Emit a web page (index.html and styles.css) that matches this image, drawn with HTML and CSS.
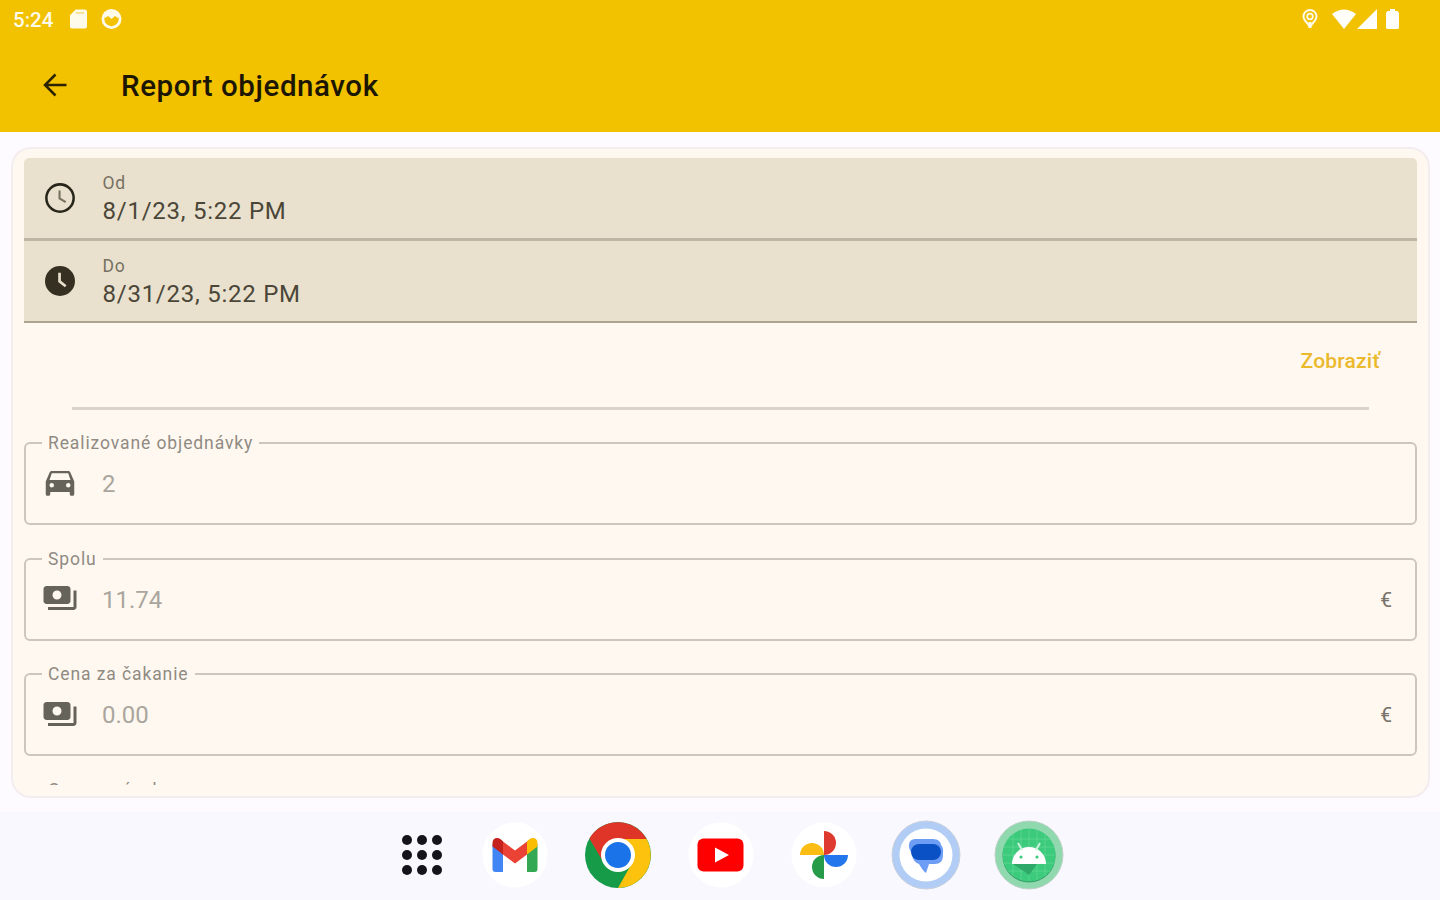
FILE: index.html
```html
<!DOCTYPE html>
<html lang="sk">
<head>
<meta charset="utf-8">
<title>Report objednávok</title>
<link rel="stylesheet" href="styles.css">
</head>
<body>
<div class="screen">
  <header class="header">
    <div class="status">
      <span class="time">5:24</span>
      <svg class="st-sd" width="17" height="20" viewBox="0 0 18 20"><path fill="#fffbea" d="M6 0h10a2 2 0 0 1 2 2v16a2 2 0 0 1-2 2H2a2 2 0 0 1-2-2V6z"/><path d="M6 3.600h9" stroke="#f2d768" stroke-width="1.400"/></svg>
      <svg class="st-face" width="21" height="20" viewBox="0 0 21 20"><circle cx="10.500" cy="10" r="8.600" fill="none" stroke="#fffbea" stroke-width="2.800"/><path fill="#fffbea" d="M3 3h15l-1 6-3-2-3.500 3L7 7 4 9z"/></svg>
      <span class="spacer"></span>
      <svg class="st-pin" width="16" height="20" viewBox="0 0 16 20"><path fill="none" stroke="#fffbea" stroke-width="2" d="M8 18.500C7 14.500 1.500 12 1.500 7.500a6.500 6.500 0 0 1 13 0C14.500 12 9 14.500 8 18.500z"/><circle cx="8" cy="7.500" r="2.800" fill="none" stroke="#fffbea" stroke-width="1.800"/><path d="M8 13v6" stroke="#fffbea" stroke-width="3"/></svg>
      <svg class="st-wifi" width="24" height="20" viewBox="0 0 24 20"><path fill="#fffef8" d="M0 5Q12-4 24 5L12 20z"/></svg>
      <svg class="st-cell" width="20" height="20" viewBox="0 0 20 20"><path fill="#fffef8" d="M20 0v20H0z"/></svg>
      <svg class="st-batt" width="13" height="20" viewBox="0 0 13 20"><path fill="#fffef8" d="M4 0h5v2h2.500L13 4v14.500a1.500 1.500 0 0 1-1.500 1.500h-10A1.500 1.500 0 0 1 0 18.500V4l1.500-2H4z"/></svg>
    </div>
    <div class="appbar">
      <svg width="24" height="24" viewBox="0 0 24 24"><path d="M23.500 12H2M12.500 1.500 2 12l10.500 10.500" fill="none" stroke="#2b2200" stroke-width="2.500"/></svg>
      <h1 class="title">Report objednávok</h1>
    </div>
  </header>

  <main class="content">
    <section class="card">
      <div class="scroll">
        <div class="filled first">
          <svg class="icon" width="36" height="36" viewBox="0 0 24 24"><circle cx="12" cy="12" r="9.100" fill="none" stroke="#28251b" stroke-width="1.700"/><path d="M11.700 7v5.200l4.100 2.500" fill="none" stroke="#77715f" stroke-width="1.400"/></svg>
          <div class="stack"><span class="label">Od</span><span class="value">8/1/23, 5:22 PM</span></div>
        </div>
        <div class="filled">
          <svg class="icon" width="36" height="36" viewBox="0 0 24 24"><circle cx="12" cy="12" r="10" fill="#353021"/><path d="M11.700 6.500v5.700l4.100 3.300" fill="none" stroke="#e8e0cd" stroke-width="1.800"/></svg>
          <div class="stack"><span class="label">Do</span><span class="value">8/31/23, 5:22 PM</span></div>
        </div>
        <div class="actions"><button class="show">Zobraziť</button></div>
        <div class="divider"></div>

        <fieldset class="outlined">
          <legend>Realizované objednávky</legend>
          <div class="row">
            <svg class="icon" width="36" height="36" viewBox="0 0 24 24"><path fill="#66635b" fill-rule="evenodd" d="M18.920 5.010C18.720 4.420 18.160 4 17.500 4h-11c-.66 0-1.210.42-1.420 1.010L2.500 11v8.500c0 .55.450 1 1 1h1c.55 0 1-.45 1-1V18h13v1.500c0 .55.450 1 1 1h1c.55 0 1-.45 1-1V11zM6.500 15a1.500 1.500 0 1 1 0-3 1.500 1.500 0 0 1 0 3zm11 0a1.500 1.500 0 1 1 0-3 1.500 1.500 0 0 1 0 3zM5 10l1.500-4.500h11L19 10z"/></svg>
            <span class="value">2</span>
          </div>
        </fieldset>
        <fieldset class="outlined">
          <legend>Spolu</legend>
          <div class="row">
            <svg class="icon" width="36" height="36" viewBox="0 0 24 24"><path fill="#66635b" fill-rule="evenodd" d="M19 14V6c0-1.100-.9-2-2-2H3c-1.100 0-2 .9-2 2v8c0 1.100.9 2 2 2h14c1.100 0 2-.9 2-2zm-9-1a3 3 0 1 1 0-6 3 3 0 0 1 0 6zm13-6v11c0 1.100-.9 2-2 2H4v-2h17V7z"/></svg>
            <span class="value">11.74</span><span class="euro">€</span>
          </div>
        </fieldset>
        <fieldset class="outlined">
          <legend>Cena za čakanie</legend>
          <div class="row">
            <svg class="icon" width="36" height="36" viewBox="0 0 24 24"><path fill="#66635b" fill-rule="evenodd" d="M19 14V6c0-1.100-.9-2-2-2H3c-1.100 0-2 .9-2 2v8c0 1.100.9 2 2 2h14c1.100 0 2-.9 2-2zm-9-1a3 3 0 1 1 0-6 3 3 0 0 1 0 6zm13-6v11c0 1.100-.9 2-2 2H4v-2h17V7z"/></svg>
            <span class="value">0.00</span><span class="euro">€</span>
          </div>
        </fieldset>
        <fieldset class="outlined">
          <legend>Cena za úsek</legend>
          <div class="row"></div>
        </fieldset>
      </div>
    </section>
  </main>

  <nav class="dock">
    <svg class="apps" width="40" height="72" viewBox="14 0 40 72"><g fill="#15141b"><circle cx="19" cy="21" r="5"/><circle cx="34" cy="21" r="5"/><circle cx="49" cy="21" r="5"/><circle cx="19" cy="36" r="5"/><circle cx="34" cy="36" r="5"/><circle cx="49" cy="36" r="5"/><circle cx="19" cy="51" r="5"/><circle cx="34" cy="51" r="5"/><circle cx="49" cy="51" r="5"/></g></svg>
    <svg width="68" height="72" viewBox="0 0 68 72"><circle cx="34" cy="36" r="32.500" fill="#fff"/><path fill="#4285f4" d="M11.500 25 22 33v20h-7.500a3 3 0 0 1-3-3z"/><path fill="#34a853" d="M56.500 25 46 33v20h7.500a3 3 0 0 0 3-3z"/><path fill="#ea4335" d="m20 21 14 10.500L48 21v13L34 44.500 20 34z"/><path fill="#c5221f" d="M11.500 24c0-5 5-6.500 9-3l1.500 1.500v13l-10.500-8z"/><path fill="#fbbc04" d="M56.500 24c0-5-5-6.500-9-3L46 22.500v13l10.500-8z"/></svg>
    <svg width="68" height="72" viewBox="0 0 68 72"><circle cx="34" cy="36" r="33" fill="#169b49"/><path fill="#fcc20d" d="M34 20h28.600A33 33 0 0 1 34 69l14-25z"/><path fill="#df3529" d="M5.400 19.500A33 33 0 0 1 62.600 20H34L20.500 45z"/><circle cx="34" cy="36" r="17" fill="#fff"/><circle cx="34" cy="36" r="13" fill="#1a73e8"/></svg>
    <svg width="68" height="72" viewBox="0 0 68 72"><circle cx="34" cy="36" r="32.500" fill="#fff"/><rect x="10.500" y="19.500" width="46" height="33" rx="6" fill="#f00"/><path fill="#fff" d="m28 28.500 14 7.500-14 7.500z"/></svg>
    <svg width="68" height="72" viewBox="0 0 68 72"><circle cx="34" cy="36" r="32.500" fill="#fff"/><path fill="#df3a30" d="M34 12a12 12 0 0 1 0 24z"/><path fill="#fbbc14" d="M10 36a12 12 0 0 1 24 0z"/><path fill="#269c4a" d="M34 36v24a12 12 0 0 1 0-24z"/><path fill="#2476ed" d="M34 36h24a12 12 0 0 1-24 0z"/></svg>
    <svg width="68" height="72" viewBox="0 0 68 72"><circle cx="34" cy="36" r="34" fill="#b1cdf5" stroke="#c8d0dc" stroke-width="1"/><circle cx="34" cy="36" r="26.500" fill="#fff"/><path fill="#6e9df5" d="M23 20h18c5 0 8 3 8 6 3 3 2 7 2 10 0 6-3 9-8 9h-6l-3 9c-3-2-5-6-7-9-5-2-7-6-7-11-5-5-4-14 3-14z"/><rect x="19" y="25" width="30" height="16" rx="8" fill="#0a51c5"/></svg>
    <svg width="68" height="72" viewBox="0 0 68 72"><circle cx="34" cy="36" r="34" fill="#90d9ae" stroke="#bdd1c5" stroke-width="1"/><circle cx="34" cy="37" r="26.500" fill="#389c68"/><circle cx="34" cy="36" r="26.500" fill="#3ccb7c"/><path d="M18 15v42M26 11v50M34 10v52M42 11v50M50 15v42M13 20h42M9 28h50M8 36h52M9 44h50M13 52h42" stroke="#62d898" stroke-width=".7"/><path fill="#2fa968" d="M18 45h24L34 56z"/><path fill="#fff" d="M17 45a17 17 0 0 1 34 0z"/><path d="m23 24 4 7m18-7-4 7" stroke="#c9f2da" stroke-width="2"/><circle cx="26" cy="38" r="1.600" fill="#3ccb7c"/><circle cx="42" cy="38" r="1.600" fill="#3ccb7c"/></svg>
  </nav>
</div>
</body>
</html>
```
FILE: styles.css
```css
* { box-sizing: border-box; }
body { margin: 0; font-family: Roboto, "Liberation Sans", sans-serif; background: #fdfbff; }
.screen { width: 1440px; height: 900px; display: flex; flex-direction: column; overflow: hidden; }
svg { display: block; flex: none; }

.header { height: 132px; background: #f2c100; flex: none; }
.status { height: 38px; display: flex; align-items: center; padding: 0 41px 0 13px; }
.time { color: #fffbea; font-size: 20.500px; font-weight: 500; width: 57px; line-height: 24px; padding-top: 1px; }
.st-face { margin-left: 14px; }
.spacer { flex: 1; }
.st-wifi { margin-left: 14px; }
.st-cell { margin-left: 1px; }
.st-batt { margin-left: 9px; }
.appbar { height: 94px; display: flex; align-items: center; padding: 0 43px; gap: 54px; }
.title { margin: 2px 0 0; font-size: 29.500px; font-weight: 500; letter-spacing: .58px; color: #1c1600; line-height: 36px; }

.content { height: 680px; flex: none; padding: 15px 10px 14px 11px; }
.card { height: 651px; background: #fff8f0; border: 2px solid #f3edef; border-radius: 20px; padding: 9px 11px 0; }
.scroll { height: 627px; overflow: hidden; }

.filled { height: 82px; background: #e9e1ce; border-bottom: 2px solid #a9a390; display: flex; align-items: center; padding: 0 18px; gap: 25px; }
.filled.first { height: 83px; border-radius: 5px 5px 0 0; border-bottom: 3px solid #bdb6a4; }
.filled .icon { margin-left: -.500px; }
.stack { display: flex; flex-direction: column; padding-top: 2px; }
.label { font-size: 17.500px; line-height: 24px; letter-spacing: .8px; color: #777162; }
.filled .value { font-size: 24px; line-height: 32px; letter-spacing: .75px; color: #4b4638; }

.actions { height: 84px; display: flex; justify-content: flex-end; padding: 20px 37px 0 0; }
.show { height: 36px; border: 0; padding: 0; background: none; font: 500 21px/36px Roboto, sans-serif; letter-spacing: .2px; color: #ebb92c; }
.divider { height: 3px; margin: 0 48px 23px; background: #d8d3cb; }

.outlined { height: 92px; margin: 0 0 23.500px; border: 2px solid #cbc7bf; border-radius: 6px; padding: 0 23px 0 16px; min-width: 0; }
.outlined legend { margin: 0; padding: 0 6px; height: 20px; font-size: 17.500px; line-height: 20px; letter-spacing: .9px; color: #8f8b83; }
.row { height: 62px; display: flex; align-items: center; gap: 24px; }
.outlined .icon { margin-top: -3px; }
.outlined .value { flex: 1; font-size: 24px; letter-spacing: 0; color: #aaa69e; }
.euro { font-size: 21px; color: #77736b; }

.dock { height: 88px; flex: none; background: #faf8ff; display: flex; align-items: center; gap: 34.700px; padding: 0 0 2px 401.500px; }
.dock svg { overflow: visible; }
.apps { margin-right: 5.300px; }
```
